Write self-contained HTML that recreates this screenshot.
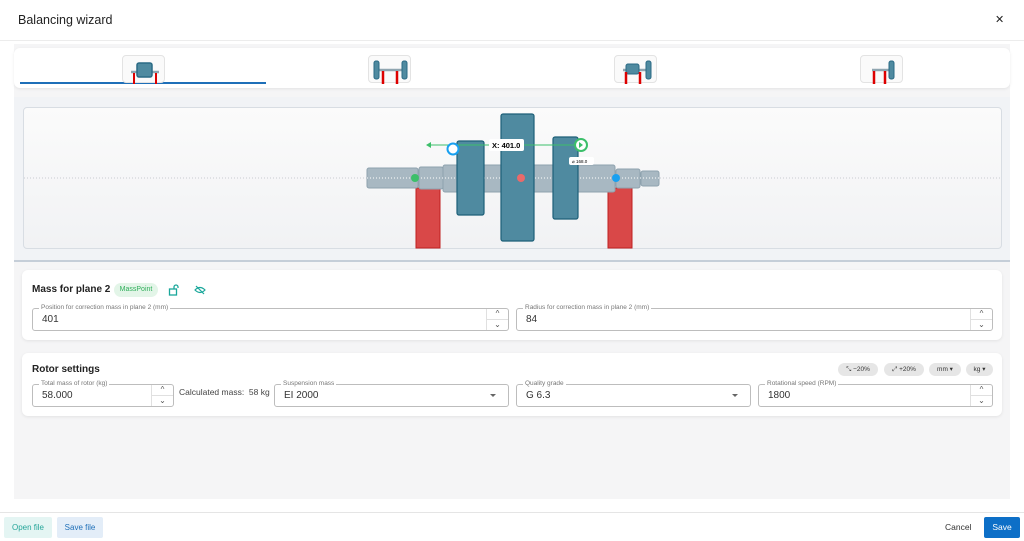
<!DOCTYPE html>
<html><head><meta charset="utf-8"><style>
*{box-sizing:border-box;margin:0;padding:0}
body{width:1024px;height:541px;background:#fff;font-family:"Liberation Sans",sans-serif;position:relative;overflow:hidden;color:#222}
.a{position:absolute}
.card{position:absolute;background:#fff;border-radius:6px;box-shadow:0 1px 3px rgba(0,0,0,.08)}
.fld{position:absolute;border:1px solid #bdbdbd;border-radius:3px;height:23px;background:#fff}
.fld .lb{position:absolute;top:-6px;left:6px;background:#fff;padding:0 2px;font-size:6.5px;color:#777;line-height:10px}
.fld .v{position:absolute;left:9px;top:5px;font-size:10px;color:#333}
.spin{position:absolute;right:0;top:0;width:22px;height:21px;border-left:1px solid #e0e0e0;font-size:8px;color:#555;text-align:center}
.spin div{height:10.5px;line-height:10px}
.spin div:first-child{border-bottom:1px solid #e0e0e0}
.dd{position:absolute;right:12px;top:9px;width:0;height:0;border-left:3px solid transparent;border-right:3px solid transparent;border-top:3px solid #666}
.chip{position:absolute;top:363px;height:13px;border-radius:7px;background:#e6e6e6;font-size:6.5px;line-height:13px;text-align:center;color:#333}
.tab{position:absolute;top:55px;width:43px;height:28px;border:1px solid #e3e3e3;border-radius:4px;background:#fafafa}
</style></head><body>
<div class="a" style="left:18px;top:13px;font-size:12.5px;color:#222">Balancing wizard</div>
<div class="a" style="left:995px;top:13px;font-size:11px">✕</div>
<div class="a" style="left:0;top:40px;width:1024px;height:1px;background:#ececec"></div>
<div class="a" style="left:14px;top:44px;width:996px;height:455px;background:#f5f5f6"></div>
<div class="card" style="left:14px;top:48px;width:996px;height:40px"></div>
<div class="a" style="left:20px;top:82px;width:246px;height:2px;background:#1e6fb8"></div>
<div class="tab" style="left:122px"><svg width="43" height="28"><line x1="8" y1="16" x2="36" y2="16" stroke="#8fa5b0" stroke-width="2.5"/><rect x="14" y="7" width="15" height="14" rx="2" fill="#4f8aa0" stroke="#2a6a85" stroke-width="1.5"/><line x1="11" y1="17" x2="11" y2="28" stroke="#d00" stroke-width="2"/><line x1="33" y1="17" x2="33" y2="28" stroke="#d00" stroke-width="2"/></svg></div>
<div class="tab" style="left:368px"><svg width="43" height="28"><line x1="8" y1="14" x2="35" y2="14" stroke="#8fa5b0" stroke-width="2.5"/><rect x="5" y="5" width="5" height="18" rx="2" fill="#4f8aa0" stroke="#2a6a85"/><rect x="33" y="5" width="5" height="18" rx="2" fill="#4f8aa0" stroke="#2a6a85"/><line x1="14" y1="15" x2="14" y2="28" stroke="#d00" stroke-width="2.5"/><line x1="28" y1="15" x2="28" y2="28" stroke="#d00" stroke-width="2.5"/></svg></div>
<div class="tab" style="left:614px"><svg width="43" height="28"><line x1="8" y1="14" x2="35" y2="14" stroke="#8fa5b0" stroke-width="2.5"/><rect x="11" y="8" width="13" height="10" rx="2" fill="#4f8aa0" stroke="#2a6a85"/><rect x="31" y="5" width="5" height="18" rx="2" fill="#4f8aa0" stroke="#2a6a85"/><line x1="11" y1="16" x2="11" y2="28" stroke="#d00" stroke-width="2.5"/><line x1="25" y1="16" x2="25" y2="28" stroke="#d00" stroke-width="2.5"/></svg></div>
<div class="tab" style="left:860px"><svg width="43" height="28"><line x1="11" y1="14" x2="31" y2="14" stroke="#8fa5b0" stroke-width="2.5"/><rect x="28" y="5" width="5" height="18" rx="2" fill="#4f8aa0" stroke="#2a6a85"/><line x1="13" y1="15" x2="13" y2="28" stroke="#d00" stroke-width="2.5"/><line x1="24" y1="15" x2="24" y2="28" stroke="#d00" stroke-width="2.5"/></svg></div>
<div class="a" style="left:14px;top:97px;width:996px;height:165px;background:#f1f3f6;border-bottom:2px solid #c5ced8"></div>
<div class="a" style="left:23px;top:107px;width:979px;height:142px;border:1px solid #d8dde3;border-radius:4px;background:linear-gradient(#fbfbfb,#f1f2f4)"></div>
<svg class="a" style="left:0;top:0" width="1024" height="262">
<line x1="24" y1="178" x2="1001" y2="178" stroke="#c8ccd0" stroke-dasharray="1,2"/>
<rect x="416" y="188" width="24" height="60" fill="#d94848" stroke="#c02020"/>
<rect x="608" y="188" width="24" height="60" fill="#d94848" stroke="#c02020"/>
<g fill="#a8b8c2" stroke="#8ea2ae" stroke-width="1"><rect x="367" y="168" width="51" height="20" rx="2"/><rect x="419" y="167" width="24" height="22" rx="2"/><rect x="443" y="165" width="172" height="27" rx="2"/><rect x="616" y="169" width="24" height="19" rx="2"/><rect x="641" y="171" width="18" height="15" rx="2"/></g>
<line x1="367" y1="178" x2="659" y2="178" stroke="#fff" stroke-dasharray="1,2"/>
<g fill="#4f8aa0" stroke="#1d5f78" stroke-width="1.2"><rect x="457" y="141" width="27" height="74" rx="2"/><rect x="501" y="114" width="33" height="127" rx="2"/><rect x="553" y="137" width="25" height="82" rx="2"/></g>
<circle cx="415" cy="178" r="4" fill="#3cbf6a"/><circle cx="521" cy="178" r="4" fill="#ea6a6a"/><circle cx="616" cy="178" r="4" fill="#18a0f0"/>
<line x1="429" y1="145" x2="585" y2="145" stroke="#3cbf6a"/><path d="M426 145 l5 -3 v6z" fill="#3cbf6a"/>
<circle cx="453" cy="149" r="5.5" fill="#fff" stroke="#18a0f0" stroke-width="2"/>
<circle cx="581" cy="145" r="6" fill="#fff" stroke="#3cbf6a" stroke-width="2"/><path d="M579 142 l4 3 -4 3z" fill="#3cbf6a"/>
<rect x="489" y="139" width="35" height="12" rx="2" fill="#fff"/><text x="492" y="148" font-size="7.5" font-weight="bold" font-family="Liberation Sans">X: 401.0</text>
<rect x="569" y="157" width="25" height="8" rx="2" fill="#fff"/><text x="572" y="163" font-size="4.5" font-family="Liberation Sans">⌀ 168.0</text>
</svg>
<div class="card" style="left:22px;top:270px;width:980px;height:70px"></div>
<div class="a" style="left:32px;top:284px;font-size:10px;font-weight:bold">Mass for plane 2</div>
<div class="a" style="left:114px;top:283px;width:44px;height:14px;border-radius:7px;background:#e3f5e8;color:#2fae5a;font-size:7px;line-height:14px;text-align:center">MassPoint</div>
<svg class="a" style="left:168px;top:284px" width="12" height="12"><rect x="1.5" y="5" width="7" height="6" fill="none" stroke="#1aa79b" stroke-width="1.3"/><path d="M6 5 V3 a2 2 0 0 1 4 0 V4" fill="none" stroke="#1aa79b" stroke-width="1.3"/></svg>
<svg class="a" style="left:194px;top:285px" width="12" height="10"><path d="M1 5 Q6 0 11 5 Q6 10 1 5Z" fill="none" stroke="#1aa79b" stroke-width="1.2"/><line x1="2" y1="1" x2="10" y2="9" stroke="#1aa79b" stroke-width="1.2"/></svg>
<div class="fld" style="left:32px;top:308px;width:477px"><span class="lb">Position for correction mass in plane 2 (mm)</span><span class="v">401</span><div class="spin"><div>^</div><div>⌄</div></div></div>
<div class="fld" style="left:516px;top:308px;width:477px"><span class="lb">Radius for correction mass in plane 2 (mm)</span><span class="v">84</span><div class="spin"><div>^</div><div>⌄</div></div></div>
<div class="card" style="left:22px;top:353px;width:980px;height:63px"></div>
<div class="a" style="left:32px;top:364px;font-size:10px;font-weight:bold">Rotor settings</div>
<div class="chip" style="left:838px;width:40px">⤡ −20%</div>
<div class="chip" style="left:884px;width:40px">⤢ +20%</div>
<div class="chip" style="left:929px;width:32px">mm ▾</div>
<div class="chip" style="left:966px;width:27px">kg ▾</div>
<div class="fld" style="left:32px;top:384px;width:142px"><span class="lb">Total mass of rotor (kg)</span><span class="v">58.000</span><div class="spin"><div>^</div><div>⌄</div></div></div>
<div class="a" style="left:179px;top:387px;font-size:8.5px;color:#444">Calculated mass:&nbsp; 58 kg</div>
<div class="fld" style="left:274px;top:384px;width:235px"><span class="lb">Suspension mass</span><span class="v">EI 2000</span><span class="dd"></span></div>
<div class="fld" style="left:516px;top:384px;width:235px"><span class="lb">Quality grade</span><span class="v">G 6.3</span><span class="dd"></span></div>
<div class="fld" style="left:758px;top:384px;width:235px"><span class="lb">Rotational speed (RPM)</span><span class="v">1800</span><div class="spin"><div>^</div><div>⌄</div></div></div>
<div class="a" style="left:0;top:512px;width:1024px;height:1px;background:#e5e5e5"></div>
<div class="a" style="left:4px;top:517px;width:48px;height:21px;background:#e4f5f3;color:#26a69a;font-size:8px;line-height:21px;text-align:center;border-radius:2px">Open file</div>
<div class="a" style="left:57px;top:517px;width:46px;height:21px;background:#e3edf8;color:#1e6fb8;font-size:8px;line-height:21px;text-align:center;border-radius:2px">Save file</div>
<div class="a" style="left:945px;top:522px;font-size:8.5px;color:#333">Cancel</div>
<div class="a" style="left:984px;top:517px;width:36px;height:21px;background:#0d6fc7;color:#fff;font-size:8.5px;line-height:21px;text-align:center;border-radius:2px">Save</div>
</body></html>
